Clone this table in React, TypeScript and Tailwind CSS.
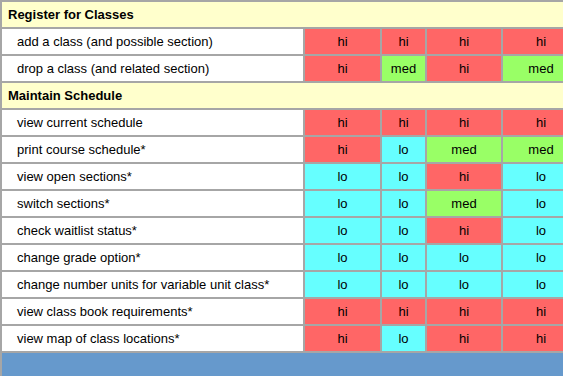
import { Fragment } from 'react';

type Level = 'hi' | 'med' | 'lo';

interface Row {
  label: string;
  levels: Level[];
}

interface Section {
  title: string;
  rows: Row[];
}

const sections: Section[] = [
  {
    title: 'Register for Classes',
    rows: [
      { label: 'add a class (and possible section)', levels: ['hi', 'hi', 'hi', 'hi'] },
      { label: 'drop a class (and related section)', levels: ['hi', 'med', 'hi', 'med'] },
    ],
  },
  {
    title: 'Maintain Schedule',
    rows: [
      { label: 'view current schedule', levels: ['hi', 'hi', 'hi', 'hi'] },
      { label: 'print course schedule*', levels: ['hi', 'lo', 'med', 'med'] },
      { label: 'view open sections*', levels: ['lo', 'lo', 'hi', 'lo'] },
      { label: 'switch sections*', levels: ['lo', 'lo', 'med', 'lo'] },
      { label: 'check waitlist status*', levels: ['lo', 'lo', 'hi', 'lo'] },
      { label: 'change grade option*', levels: ['lo', 'lo', 'lo', 'lo'] },
      { label: 'change number units for variable unit class*', levels: ['lo', 'lo', 'lo', 'lo'] },
      { label: 'view class book requirements*', levels: ['hi', 'hi', 'hi', 'hi'] },
      { label: 'view map of class locations*', levels: ['hi', 'lo', 'hi', 'hi'] },
    ],
  },
];

const levelColor: Record<Level, string> = {
  hi: 'bg-[#ff6666]',
  med: 'bg-[#99ff66]',
  lo: 'bg-[#66ffff]',
};

const App = () => {
  return (
    <div className="w-[563px] h-[376px] overflow-hidden bg-white">
      <div
        className="grid w-[579px] grid-cols-[301px_75px_43px_74px_76px] auto-rows-[25px] gap-[2px] p-[2px] bg-[#a6a6a6] text-black"
        style={{ fontFamily: '"Liberation Sans", Arial, sans-serif' }}
      >
        {sections.map((section) => (
          <Fragment key={section.title}>
            <div className="col-span-5 flex items-center bg-[#ffffcc] pl-[6px] text-[13px] font-bold">
              {section.title}
            </div>
            {section.rows.map((row) => (
              <Fragment key={row.label}>
                <div className="flex items-center bg-white pl-[15px] text-[13px]">
                  {row.label}
                </div>
                {row.levels.map((level, index) => (
                  <div
                    key={index}
                    className={`flex items-center justify-center text-[13px] ${levelColor[level]}`}
                  >
                    {level}
                  </div>
                ))}
              </Fragment>
            ))}
          </Fragment>
        ))}
        <div className="col-span-5 h-[40px] bg-[#6699cc]" />
      </div>
    </div>
  );
};

export default App;
